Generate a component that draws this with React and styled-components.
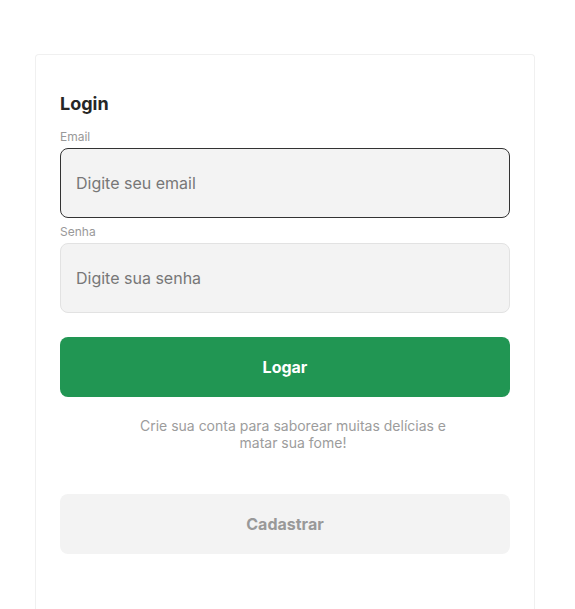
import React from 'react'
import styled, { createGlobalStyle } from 'styled-components'

const Global = createGlobalStyle`
  body {
    margin: 0;
    background: #fff;
    font-family: Inter, "Noto Sans", sans-serif;
  }
  * { box-sizing: border-box; }
`

const Page = styled.main`
  padding: 54px 40px 0 35px;
  display: flex;
`

const Card = styled.section`
  width: 500px;
  min-height: 570px;
  border: 1px solid #f0f0f0;
  border-bottom: none;
  border-radius: 4px 4px 0 0;
  padding: 38px 24px 0;
  display: flex;
  flex-direction: column;
`

const Title = styled.h2`
  margin: 0 0 14px;
  font-size: 18px;
  line-height: 22px;
  font-weight: 700;
  color: #262626;
`

const Label = styled.label`
  font-size: 12px;
  line-height: 15px;
  color: #999;
  margin-bottom: 4px;
`

const Input = styled.input`
  height: 70px;
  width: 100%;
  border-radius: 8px;
  border: 1px solid ${p => (p.$active ? '#333' : '#e2e2e2')};
  background: #f3f3f3;
  padding: 0 15px;
  font-family: inherit;
  font-size: 16px;
  color: #333;
  margin-bottom: ${p => p.$gap || 6}px;
  outline: none;
  &::placeholder { color: #777; }
`

const Button = styled.button`
  height: 60px;
  width: 100%;
  border: none;
  border-radius: 8px;
  font-family: inherit;
  font-size: 16px;
  font-weight: 700;
  background: ${p => (p.$primary ? '#219653' : '#f3f3f3')};
  color: ${p => (p.$primary ? '#fff' : '#999')};
  cursor: pointer;
`

const Hint = styled.p`
  margin: 20px auto 43px;
  max-width: 336px;
  padding-left: 16px;
  text-align: center;
  font-size: 14px;
  line-height: 17px;
  color: #9c9c9c;
`

export default function App() {
  return (
    <Page>
      <Global />
      <Card>
        <Title>Login</Title>
        <Label>Email</Label>
        <Input $active placeholder="Digite seu email" />
        <Label>Senha</Label>
        <Input type="password" placeholder="Digite sua senha" $gap={24} />
        <Button $primary>Logar</Button>
        <Hint>Crie sua conta para saborear muitas delícias e matar sua fome!</Hint>
        <Button>Cadastrar</Button>
      </Card>
    </Page>
  )
}
